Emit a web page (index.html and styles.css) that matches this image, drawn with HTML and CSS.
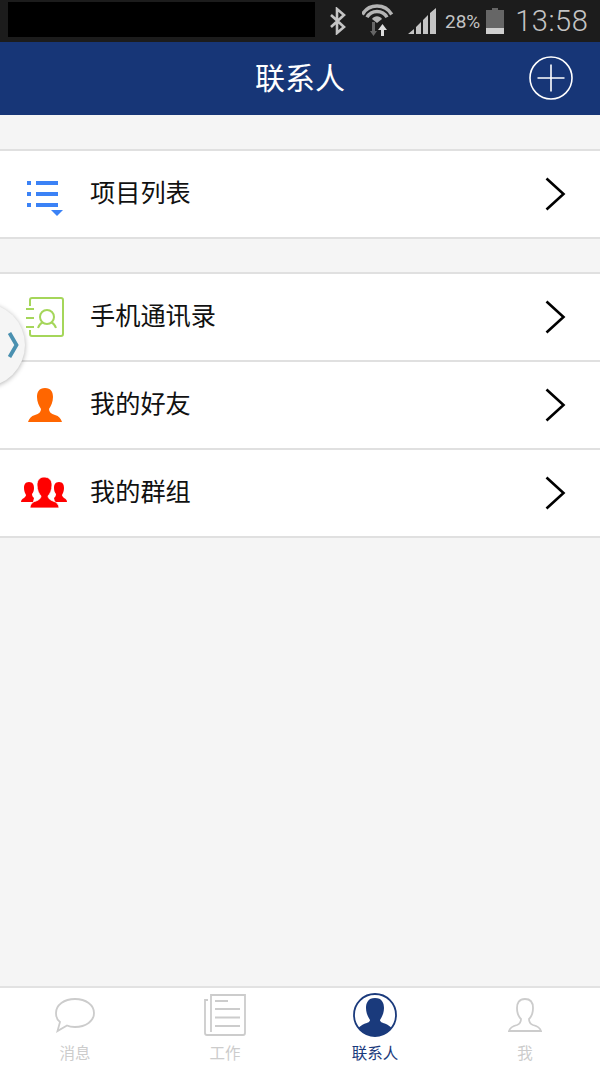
FILE: index.html
```html
<!DOCTYPE html>
<html>
<head>
    <title>联系人</title>
    <link rel="stylesheet" href="styles.css">
</head>
<body>
    <div class="status-bar">
        <div class="status-black"></div>
        <svg class="st-bt" width="18" height="28" viewBox="0 0 18 28"><path d="M2 8l13 12-7 6V2l7 6L2 20" fill="none" stroke="#c4c4c4" stroke-width="2.600"/></svg>
        <svg class="st-wifi" width="32" height="34" viewBox="0 0 32 34"><path d="M.3 10.500A17 17 0 0 1 29.700 10.500M5 13.250A11.500 11.500 0 0 1 25 13.250" fill="none" stroke="#b4b4b4" stroke-width="3.500"/><path d="M15 19l-5-4a6 6 0 0 1 10 0z" fill="#b4b4b4"/><path d="M10 18h3v9h2l-3.500 5L8 27h2z" fill="#666"/><path d="M20.500 20l4.500 6h-3v6h-3v-6h-3z" fill="#ddd"/></svg>
        <svg class="st-signal" width="28" height="28" viewBox="0 0 28 28"><path d="M0 27l6-5v5zM8 20l5-5v12H8zM15 13l5-5v19h-5zM22 6l6-5v26h-6z" fill="#c4c4c4"/></svg>
        <span class="st-pct">28%</span>
        <svg class="st-batt" width="18" height="26" viewBox="0 0 18 26"><path d="M6 0h6v2h6v24H0V2h6z" fill="#666"/><rect y="20" width="18" height="6" fill="#cfcfcf"/></svg>
        <span class="st-time">13:58</span>
    </div>

    <div class="title-bar">
        <span class="title">联系人</span>
        <svg class="add-btn" width="44" height="44" viewBox="0 0 44 44"><circle cx="22" cy="22" r="21" fill="none" stroke="#fff" stroke-width="1.600"/><path d="M8.500 22h27M22 8.500v27" stroke="#fff" stroke-width="1.600"/></svg>
    </div>

    <div class="content">
        <div class="group">
            <div class="row">
                <svg class="row-icon" width="40" height="44" viewBox="0 0 40 44"><g fill="#3b82f6"><rect x="2" y="9" width="4" height="4"/><rect x="11" y="9" width="22" height="4"/><rect x="2" y="20" width="4" height="4"/><rect x="11" y="20" width="22" height="4"/><rect x="2" y="31" width="4" height="4"/><rect x="11" y="31" width="22" height="4"/><path d="M26 38h12l-6 6z"/></g></svg>
                <span class="row-text">项目列表</span>
                <svg class="chevron" width="24" height="36" viewBox="0 0 24 36"><path d="M2.500 2.500L19.500 18 2.500 33.500" fill="none" stroke="#000" stroke-width="2.600"/></svg>
            </div>
        </div>

        <div class="group">
            <div class="row">
                <svg class="row-icon" width="40" height="40" viewBox="0 0 40 40"><g fill="none" stroke="#a5d65a" stroke-width="2"><path d="M5 9V3a2 2 0 0 1 2-2h29a2 2 0 0 1 2 2v34a2 2 0 0 1-2 2H7a2 2 0 0 1-2-2v-4"/><path d="M1 12h8M1 21h8M1 30h8"/><circle cx="22" cy="20" r="7"/><path d="M13 31c1-3 3-5 5-6M31 31c-1-3-3-5-5-6"/></g></svg>
                <span class="row-text">手机通讯录</span>
                <svg class="chevron" width="24" height="36" viewBox="0 0 24 36"><path d="M2.500 2.500L19.500 18 2.500 33.500" fill="none" stroke="#000" stroke-width="2.600"/></svg>
            </div>
            <div class="row">
                <svg class="row-icon" width="40" height="40" viewBox="0 0 40 40"><path d="M20 3c6 0 8 4 8 9 0 5-2 9-4 12 0 3 2 5 6 6 4 1 6 4 7 7H3c1-3 3-6 7-7 4-1 6-3 6-6-2-3-4-7-4-12 0-5 2-9 8-9z" fill="#ff6600"/></svg>
                <span class="row-text">我的好友</span>
                <svg class="chevron" width="24" height="36" viewBox="0 0 24 36"><path d="M2.500 2.500L19.500 18 2.500 33.500" fill="none" stroke="#000" stroke-width="2.600"/></svg>
            </div>
            <div class="row">
                <svg class="row-icon group-icon" width="48" height="32" viewBox="0 0 48 32"><g fill="#ff0000"><path d="M8 5c4 0 5 3 5 6 0 3-1 5-2 6 0 2 1 3 2 4l-1 4H0c0-2 1-3 3-4 1-1 2-2 2-3-1-2-2-4-2-7 0-3 1-6 5-6z"/><path d="M38 5c-4 0-5 3-5 6 0 3 1 5 2 6 0 2-1 3-2 4l1 4h12c0-2-1-3-3-4-1-1-2-2-2-3 1-2 2-4 2-7 0-3-1-6-5-6z"/><path d="M23 0c5 0 8 3 8 8 0 5-2 9-4 11 0 2 2 4 5 5 4 1 6 4 6 7H9c0-3 2-6 6-7 3-1 5-3 5-5-2-2-4-6-4-11 0-5 3-8 7-8z" stroke="#fff" stroke-width=".8"/></g></svg>
                <span class="row-text">我的群组</span>
                <svg class="chevron" width="24" height="36" viewBox="0 0 24 36"><path d="M2.500 2.500L19.500 18 2.500 33.500" fill="none" stroke="#000" stroke-width="2.600"/></svg>
            </div>
        </div>
    </div>

    <div class="side-tab">
        <svg width="12" height="26" viewBox="0 0 12 26"><path d="M2.500 1l7 12-7 12" fill="none" stroke="#4a90b0" stroke-width="3.800"/></svg>
    </div>

    <div class="tab-bar">
        <div class="tab">
            <svg class="tab-icon" width="42" height="36" viewBox="0 0 42 36"><path d="M21 2c11 0 19 6 19 14s-8 14-19 14c-3 0-6-.5-8-1.500L3.500 34 6 25C3 23 2 20 2 16 2 8 10 2 21 2z" fill="none" stroke="#ccc" stroke-width="1.800"/></svg>
            <span class="tab-label">消息</span>
        </div>
        <div class="tab">
            <svg class="tab-icon" width="42" height="42" viewBox="0 0 42 42"><g fill="none" stroke="#ccc" stroke-width="1.800"><path d="M4 6H1v33a2 2 0 0 0 2 2h36a2 2 0 0 0 2-2V1H7v37"/><path d="M11 7h13M11 15h25M11 23.500h25M11 32h25"/></g></svg>
            <span class="tab-label">工作</span>
        </div>
        <div class="tab tab-active">
            <svg class="tab-icon" width="44" height="44" viewBox="0 0 44 44"><circle cx="22" cy="22" r="21" fill="#fff" stroke="#1a3a7c" stroke-width="1.800"/><path d="M22 5c7 0 9 5 9 10 0 5-2 9-4 12 0 2 3 3 6 4 2 1 4 2 5.500 4A21 21 0 0 1 5.500 35c1.500-2 3.500-3 5.500-4 3-1 6-2 6-4-2-3-4-7-4-12 0-5 2-10 9-10z" fill="#1a3a7c"/></svg>
            <span class="tab-label">联系人</span>
        </div>
        <div class="tab">
            <svg class="tab-icon" width="34" height="36" viewBox="0 0 34 36"><path d="M17 2c6 0 8 4 8 9 0 5-2 9-4 11 0 3 1 5 4 6 4 1 7 3 8 6H1c1-3 4-5 8-6 3-1 4-3 4-6-2-2-4-6-4-11 0-5 2-9 8-9z" fill="none" stroke="#ccc" stroke-width="1.800"/></svg>
            <span class="tab-label">我</span>
        </div>
    </div>
</body>
</html>
```

FILE: styles.css
```css
html, body {
    margin: 0;
    height: 1067px;
    overflow: hidden;
}

body {
    display: flex;
    flex-direction: column;
    background: #f5f5f5;
    font-family: "Noto Sans CJK SC", "Liberation Sans", sans-serif;
    position: relative;
}

.status-bar {
    height: 42px;
    flex-shrink: 0;
    background: #1c1c1c;
    display: flex;
    align-items: center;
    color: #c4c4c4;
}

.status-black {
    width: 307px;
    height: 35px;
    margin-left: 8px;
    margin-bottom: 3px;
    background: #000;
}

.st-bt {
    margin-left: 14px;
}

.st-wifi {
    margin-left: 15px;
}

.st-signal {
    margin-left: 14px;
}

.st-pct {
    margin-left: 9px;
    font-family: Roboto, sans-serif;
    font-size: 19px;
}

.st-batt {
    margin-left: 6px;
}

.st-time {
    margin-left: 11px;
    font-family: Roboto, sans-serif;
    font-size: 29px;
    font-weight: 300;
    letter-spacing: 0.5px;
}

.title-bar {
    height: 73px;
    flex-shrink: 0;
    background: #173677;
    display: flex;
    align-items: center;
    justify-content: center;
    position: relative;
}

.title {
    color: #fff;
    font-size: 30px;
    margin-bottom: 6px;
}

.add-btn {
    position: absolute;
    right: 27px;
    top: 14px;
}

.content {
    flex: 1;
    padding-top: 34px;
}

.group {
    background: #fff;
    border-top: 2px solid #e0e0e0;
    margin-bottom: 33px;
}

.row {
    height: 86px;
    display: flex;
    align-items: center;
    border-bottom: 2px solid #e0e0e0;
}

.row-icon {
    margin-left: 25px;
    flex-shrink: 0;
}

.group-icon {
    margin-left: 21px;
    margin-right: -4px;
}

.row-text {
    margin-left: 25px;
    margin-bottom: 6px;
    flex: 1;
    font-size: 25.200px;
    color: #111;
}

.chevron {
    margin-right: 32px;
}

.side-tab {
    position: absolute;
    left: -60px;
    top: 303px;
    width: 85px;
    height: 84px;
    border-radius: 50%;
    background: #f5f5f5;
    box-shadow: 0 1px 5px rgba(0, 0, 0, 0.3);
    display: flex;
    align-items: center;
    justify-content: flex-end;
}

.side-tab svg {
    margin-right: 6px;
}

.tab-bar {
    height: 79px;
    flex-shrink: 0;
    background: #fff;
    border-top: 2px solid #e2e2e2;
    display: flex;
}

.tab {
    flex: 1;
    display: grid;
    grid-template-rows: 54px 22px;
    justify-items: center;
    align-items: center;
}

.tab-label {
    margin-bottom: 2px;
    font-size: 15.500px;
    line-height: 22px;
    color: #ccc;
}

.tab-active .tab-label {
    color: #1a3a7c;
}
```
